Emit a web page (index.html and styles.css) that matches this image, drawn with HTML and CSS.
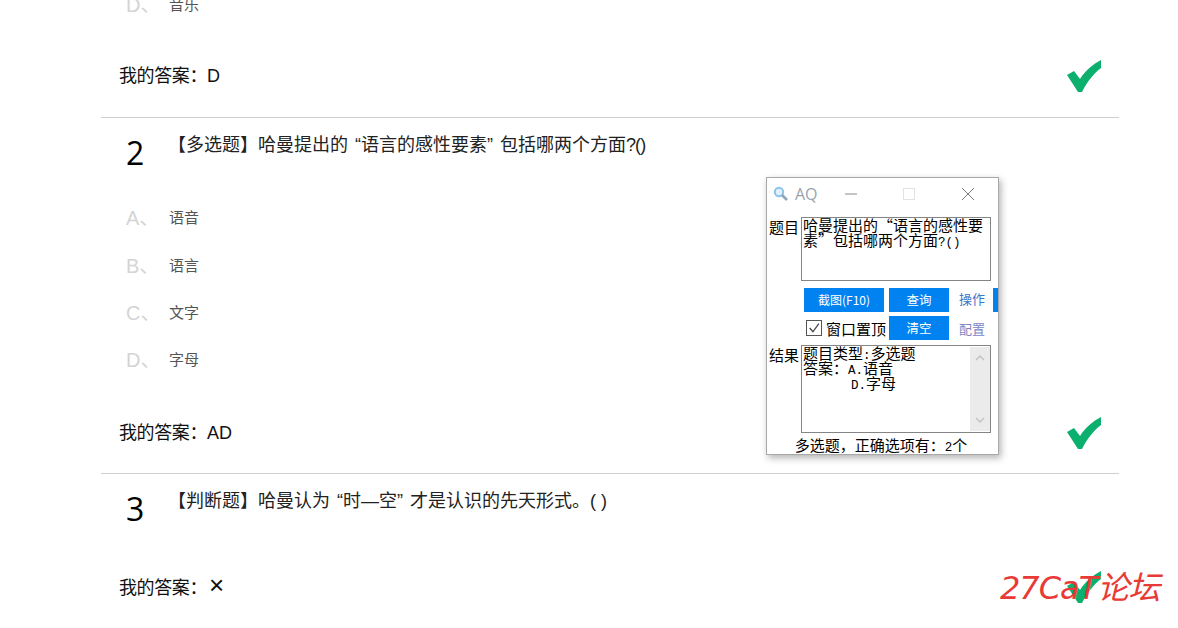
FILE: index.html
```html
<!DOCTYPE html>
<html lang="zh">
<head>
<meta charset="utf-8">
<title>AQ</title>
<link rel="stylesheet" href="styles.css">
</head>
<body>
<main class="paper">
  <section class="question first">
    <ul class="options">
      <li class="option"><span class="letter">D、</span><span class="text">音乐</span></li>
    </ul>
    <div class="answer"><span><span class="mine">我的答案：</span>D</span>
      <svg class="check" viewBox="0 0 34 32"><path d="M0 15 L7 11 L13 19 C18 11 26 4 34 0 L34 8 C27 13 20 22 15 32 L11 32 Z"/></svg>
    </div>
  </section>
  <section class="question">
    <div class="head"><span class="num">2</span><p class="title">【多选题】哈曼提出的<span class="ql">“</span>语言的感性要素<span class="qr">”</span>包括哪两个方面<span class="tight">?()</span></p></div>
    <ul class="options">
      <li class="option"><span class="letter">A、</span><span class="text">语音</span></li>
      <li class="option"><span class="letter">B、</span><span class="text">语言</span></li>
      <li class="option"><span class="letter">C、</span><span class="text">文字</span></li>
      <li class="option"><span class="letter">D、</span><span class="text">字母</span></li>
    </ul>
    <div class="answer"><span><span class="mine">我的答案：</span>AD</span>
      <svg class="check" viewBox="0 0 34 32"><path d="M0 15 L7 11 L13 19 C18 11 26 4 34 0 L34 8 C27 13 20 22 15 32 L11 32 Z"/></svg>
    </div>
  </section>
  <section class="question short">
    <div class="head"><span class="num">3</span><p class="title">【判断题】哈曼认为<span class="ql">“</span>时—空<span class="qr">”</span>才是认识的先天形式。( )</p></div>
    <div class="answer"><span><span class="mine">我的答案：</span><span class="wrong">×</span></span>
      <svg class="check" viewBox="0 0 34 32"><path d="M0 15 L7 11 L13 19 C18 11 26 4 34 0 L34 8 C27 13 20 22 15 32 L11 32 Z"/></svg>
    </div>
  </section>
</main>

<aside class="window">
  <div class="titlebar">
    <svg class="appicon" viewBox="0 0 16 16"><circle cx="6" cy="6" r="4.2" fill="#e2f0fb" stroke="#8cc3ea" stroke-width="2"/><path d="M9 9 L14 14" stroke="#8fa6ba" stroke-width="2.6"/></svg>
    <span class="apptitle">AQ</span>
    <svg class="winbtn min" viewBox="0 0 12 12"><path d="M0 6 H12" stroke="#8a8a8a"/></svg>
    <svg class="winbtn max" viewBox="0 0 12 12"><rect x=".5" y=".5" width="11" height="11" fill="none" stroke="#e3e3e3"/></svg>
    <svg class="winbtn close" viewBox="0 0 12 12"><path d="M0 0 L12 12 M12 0 L0 12" stroke="#7a7a7a"/></svg>
  </div>
  <div class="field">
    <label class="lbl top">题目</label>
    <div class="box qbox"><div class="boxtext">哈曼提出的“语言的感性要素”包括哪两个方面<span class="mono">?()</span></div></div>
  </div>
  <div class="controls">
    <div class="ctl-row">
      <button class="btn wide">截图(F10)</button>
      <button class="btn">查询</button>
      <span class="tab">操作</span>
      <span class="tabmark"></span>
    </div>
    <div class="ctl-row second">
      <label class="pin"><span class="cb"><svg viewBox="0 0 13 13"><path d="M2.5 6.5 L5.5 10 L11 2.5" fill="none" stroke="#444" stroke-width="1.2"/></svg></span>窗口置顶</label>
      <button class="btn">清空</button>
      <span class="tab">配置</span>
    </div>
  </div>
  <div class="field result">
    <label class="lbl">结果</label>
    <div class="box rbox">
      <div class="boxtext rtext">题目类型<span class="mono">:</span>多选题<br>答案：<span class="mono">A.</span>语音<br><span class="indent"><span class="mono">D.</span>字母</span></div>
      <div class="scroll">
        <svg viewBox="0 0 10 6"><path d="M1 5 L5 1 L9 5" fill="none" stroke="#c4c4c4" stroke-width="1.5"/></svg>
        <svg viewBox="0 0 10 6"><path d="M1 1 L5 5 L9 1" fill="none" stroke="#c4c4c4" stroke-width="1.5"/></svg>
      </div>
    </div>
  </div>
  <div class="status">多选题，正确选项有：<span class="mono">2</span>个</div>
</aside>

<div class="watermark">27CaT论坛</div>
</body>
</html>
```
FILE: styles.css
```css
* { box-sizing: border-box; }
html, body { margin: 0; height: 100%; overflow: hidden; background: #fff; }
body { font-family: "Liberation Sans", "Noto Sans CJK SC", sans-serif; color: #000; position: relative; }
.paper { width: 1018px; margin: -28px 0 0 101px; }
.question { border-bottom: 1px solid #cfcfcf; height: 356px; padding-top: 14px; }
.question.first { height: 146px; padding-top: 8px; }
.question.short { border-bottom: 0; height: 160px; }
.head { display: flex; padding-left: 25px; height: 61px; }
.num { width: 42px; font: 32px/40px "Open Sans", sans-serif; color: #000; padding-top: 1px; }
.title { margin: 0; font-size: 18px; line-height: 26px; color: #222; }
.ql { margin-left: 7px; }
.qr { margin-right: 7px; }
.tight { letter-spacing: -0.9px; }
.options { list-style: none; margin: 0; padding: 0 0 0 25px; }
.option { height: 47.4px; display: flex; align-items: center; font-size: 15px; }
.letter { width: 43px; font-size: 20px; color: #d4d4d4; white-space: nowrap; }
.text { color: #555; }
.answer { display: flex; justify-content: space-between; align-items: center; padding: 0 18px 0 18px; font-size: 18px; color: #111; height: 40px; margin-top: 28px; }
.mine { letter-spacing: -0.4px; }
.wrong { font-size: 26px; line-height: 18px; margin-left: 2px; }
.first .answer { margin-top: 27px; }
.short .answer { margin-top: 17px; }
.check { width: 34px; height: 32px; fill: #0bb06e; margin-top: 4px; }
.short .check { margin-top: 2px; }
.watermark { position: absolute; left: 1000px; top: 566px; font: italic 32px/44px "DejaVu Sans", "Noto Sans CJK SC", sans-serif; color: #e83a36; letter-spacing: -1px; white-space: nowrap; }

.window { position: absolute; left: 766px; top: 177px; width: 233px; height: 278px; background: #fff; border: 1px solid #a9a9a9; box-shadow: 2px 3px 7px rgba(0,0,0,.3); font: 15px/15px "Noto Sans CJK SC", sans-serif; color: #000; }
.mono { font: 12.5px/0 "Liberation Mono", monospace; }
.titlebar { height: 31px; display: flex; align-items: center; position: relative; padding-left: 6px; }
.appicon { width: 16px; height: 16px; }
.apptitle { margin-left: 6px; font: 16px "Open Sans", sans-serif; color: #9aa3ad; }
.winbtn { position: absolute; top: 10px; width: 12px; height: 12px; }
.min { left: 78px; }
.max { left: 136px; }
.close { left: 195px; }
.field { display: flex; padding-left: 2px; }
.lbl { width: 32px; font-size: 15px; line-height: 16px; padding-top: 2px; white-space: nowrap; }
.lbl.top { padding-top: 10px; }
.box { border: 1px solid #858585; background: #fff; }
.qbox { width: 190px; height: 64px; margin-top: 8px; padding: 0 1px; }
.boxtext { margin-top: -1px; }
.controls { padding: 7px 0 0 37px; }
.ctl-row { display: flex; align-items: center; height: 24px; }
.ctl-row.second { margin-top: 4px; }
.btn { border: 0; background: #0083f0; color: #fff; width: 60px; height: 24px; padding: 0; font: 12.5px/24px "Noto Sans CJK SC", sans-serif; }
.btn.wide { width: 80px; margin-right: 5px; font-size: 12px; }
.tab { font-size: 13px; color: #3a78c8; margin-left: 10px; width: 28px; white-space: nowrap; margin-top: -4px; }
.second .tab { color: #7a86c4; margin-top: 0; }
.tabmark { width: 5px; height: 24px; background: #0083f0; margin-left: 6px; }
.pin { display: flex; align-items: center; width: 85px; margin-left: 2px; font-size: 15px; margin-right: -2px; white-space: nowrap; }
.cb { width: 16px; height: 16px; border: 1px solid #555; margin-right: 4px; display: block; flex: none; }
.cb svg { display: block; width: 14px; height: 14px; }
.result { margin-top: 5px; }
.rbox { width: 190px; height: 88px; display: flex; }
.rtext { flex: 1; padding: 0 1px; white-space: nowrap; }
.indent { margin-left: 48px; }
.scroll { width: 20px; background: #ebebeb; margin: 1px 0; display: flex; flex-direction: column; justify-content: space-between; align-items: center; padding: 8px 0; }
.scroll svg { width: 10px; height: 6px; }
.status { text-align: center; padding: 4px 3px 0 0; white-space: nowrap; }
```
